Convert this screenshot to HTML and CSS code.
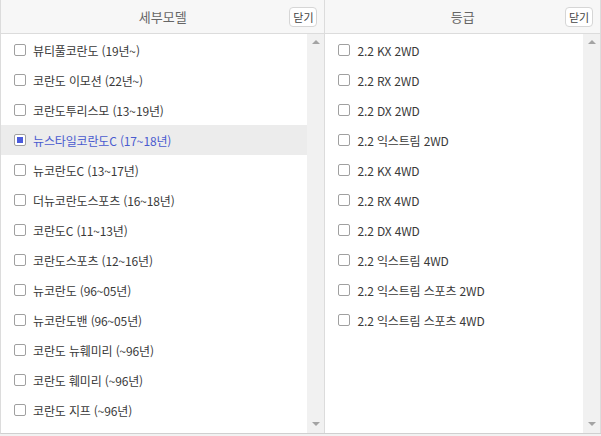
FILE: index.html
```html
<!DOCTYPE html>
<html lang="ko">
<head>
    <meta charset="UTF-8">
    <title>세부모델 / 등급</title>
<link rel="stylesheet" href="styles.css">
</head>
<body>
    <div class="picker">
        <div class="panel panel-model">
            <div class="panel-head">
                <span class="panel-title">세부모델</span>
                <button class="close-btn" type="button">닫기</button>
            </div>
            <div class="panel-body">
                <ul class="opt-list">
                    <li class="opt"><span class="chk"></span>뷰티풀코란도 (19년~)</li>
                    <li class="opt"><span class="chk"></span>코란도 이모션 (22년~)</li>
                    <li class="opt"><span class="chk"></span>코란도투리스모 (13~19년)</li>
                    <li class="opt on"><span class="chk"></span>뉴스타일코란도C (17~18년)</li>
                    <li class="opt"><span class="chk"></span>뉴코란도C (13~17년)</li>
                    <li class="opt"><span class="chk"></span>더뉴코란도스포츠 (16~18년)</li>
                    <li class="opt"><span class="chk"></span>코란도C (11~13년)</li>
                    <li class="opt"><span class="chk"></span>코란도스포츠 (12~16년)</li>
                    <li class="opt"><span class="chk"></span>뉴코란도 (96~05년)</li>
                    <li class="opt"><span class="chk"></span>뉴코란도밴 (96~05년)</li>
                    <li class="opt"><span class="chk"></span>코란도 뉴훼미리 (~96년)</li>
                    <li class="opt"><span class="chk"></span>코란도 훼미리 (~96년)</li>
                    <li class="opt"><span class="chk"></span>코란도 지프 (~96년)</li>
                </ul>
                <div class="scroll-track">
                    <span class="arrow up"></span>
                    <span class="arrow down"></span>
                </div>
            </div>
        </div>
        <div class="panel panel-grade">
            <div class="panel-head">
                <span class="panel-title">등급</span>
                <button class="close-btn" type="button">닫기</button>
            </div>
            <div class="panel-body">
                <ul class="opt-list">
                    <li class="opt"><span class="chk"></span>2.2 KX 2WD</li>
                    <li class="opt"><span class="chk"></span>2.2 RX 2WD</li>
                    <li class="opt"><span class="chk"></span>2.2 DX 2WD</li>
                    <li class="opt"><span class="chk"></span>2.2 익스트림 2WD</li>
                    <li class="opt"><span class="chk"></span>2.2 KX 4WD</li>
                    <li class="opt"><span class="chk"></span>2.2 RX 4WD</li>
                    <li class="opt"><span class="chk"></span>2.2 DX 4WD</li>
                    <li class="opt"><span class="chk"></span>2.2 익스트림 4WD</li>
                    <li class="opt"><span class="chk"></span>2.2 익스트림 스포츠 2WD</li>
                    <li class="opt"><span class="chk"></span>2.2 익스트림 스포츠 4WD</li>
                </ul>
                <div class="scroll-track">
                    <span class="arrow up"></span>
                    <span class="arrow down"></span>
                </div>
            </div>
        </div>
    </div>
</body>
</html>
```

FILE: styles.css
```css
body {
    margin: 0;
    background: #f2f2f2;
    font-family: "Noto Sans CJK KR", "Noto Sans", sans-serif;
    color: #333;
}

.picker {
    display: flex;
    width: 601px;
    height: 434px;
    box-sizing: border-box;
    border-left: 1px solid #dcdcdc;
    border-bottom: 1px solid #d0d0d0;
    background: #fff;
}

.panel {
    display: flex;
    flex-direction: column;
    border-right: 1px solid #dcdcdc;
}

.panel-model {
    width: 324px;
}

.panel-grade {
    width: 275px;
}

.panel-head {
    position: relative;
    height: 33px;
    border-bottom: 1px solid #dcdcdc;
    background: #f7f7f7;
    display: flex;
    align-items: center;
    justify-content: center;
}

.panel-title {
    font-size: 13px;
    color: #666;
}

.close-btn {
    position: absolute;
    right: 7px;
    top: 7px;
    width: 28px;
    height: 20px;
    padding: 0;
    border: 1px solid #d6d6d6;
    border-radius: 4px;
    background: #fff;
    font-family: inherit;
    font-size: 11px;
    color: #444;
    line-height: 17px;
}

.panel-body {
    flex: 1;
    display: flex;
    min-height: 0;
}

.opt-list {
    flex: 1;
    list-style: none;
    margin: 0;
    padding: 1px 0 0;
    overflow: hidden;
}

.opt {
    height: 30px;
    display: flex;
    align-items: center;
    padding-left: 13px;
    font-size: 12px;
    letter-spacing: -0.15px;
    color: #3a3a3a;
    white-space: nowrap;
}

.opt.on {
    background: #ececec;
    color: #4a5bcf;
}

.chk {
    width: 10px;
    height: 10px;
    border: 1px solid #a0a0a0;
    border-radius: 2px;
    background: #fff;
    margin-right: 7px;
    position: relative;
    box-sizing: content-box;
}

.opt.on .chk::after {
    content: "";
    position: absolute;
    left: 2px;
    top: 2px;
    width: 6px;
    height: 6px;
    background: #4b5bdc;
}

.scroll-track {
    width: 17px;
    background: #f1f1f1;
    position: relative;
}

.arrow {
    position: absolute;
    left: 5px;
    width: 0;
    height: 0;
    border-left: 4px solid transparent;
    border-right: 4px solid transparent;
}

.arrow.up {
    top: 6px;
    border-bottom: 4px solid #a3a3a3;
}

.arrow.down {
    bottom: 7px;
    border-top: 4px solid #a3a3a3;
}
```
